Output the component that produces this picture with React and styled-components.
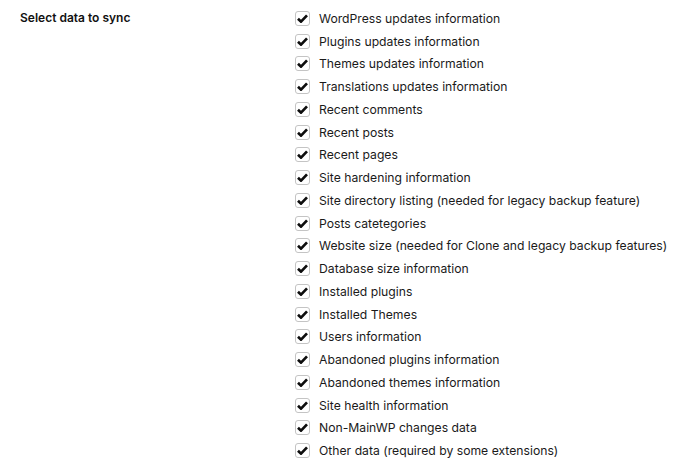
import styled, { createGlobalStyle } from 'styled-components';

const GlobalStyle = createGlobalStyle`
  body {
    margin: 0;
    background: #fff;
    font-family: Inter, "Noto Sans", sans-serif;
  }
`;

const items = [
  'WordPress updates information',
  'Plugins updates information',
  'Themes updates information',
  'Translations updates information',
  'Recent comments',
  'Recent posts',
  'Recent pages',
  'Site hardening information',
  'Site directory listing (needed for legacy backup feature)',
  'Posts catetegories',
  'Website size (needed for Clone and legacy backup features)',
  'Database size information',
  'Installed plugins',
  'Installed Themes',
  'Users information',
  'Abandoned plugins information',
  'Abandoned themes information',
  'Site health information',
  'Non-MainWP changes data',
  'Other data (required by some extensions)',
];

// heavy check like the one used by the checkbox skin
const CheckIcon = () => (
  <svg width="11" height="9" viewBox="0 0 11 9">
    <path d="M1 4.7 L4 7.6 L10 1.4" fill="none" stroke="#0d0d0d" strokeWidth="2.7" />
  </svg>
);

const App = () => {
  return (
    <>
      <GlobalStyle />
      <StForm>
        <StLabel>Select data to sync</StLabel>
        <StList>
          {items.map((item) => (
            <StRow key={item}>
              <StBox>
                <CheckIcon />
              </StBox>
              <StText>{item}</StText>
            </StRow>
          ))}
        </StList>
      </StForm>
    </>
  );
};

export default App;

const StForm = styled.div`
  display: grid;
  grid-template-columns: 275px 1fr;
  padding: 7px 0 0 20px;
`;

const StLabel = styled.div`
  font-size: 12px;
  font-weight: 600;
  color: #111;
  line-height: 22.75px;
`;

const StList = styled.div`
  display: flex;
  flex-direction: column;
`;

const StRow = styled.label`
  display: flex;
  align-items: center;
  height: 22.75px;
  white-space: nowrap;
`;

const StBox = styled.span`
  display: flex;
  align-items: center;
  justify-content: center;
  flex-shrink: 0;
  width: 13px;
  height: 13px;
  border: 1px solid #c4c4c4;
  border-radius: 3px;
  background: #fff;
  margin-right: 9px;
`;

const StText = styled.span`
  font-size: 12.2px;
  color: #1a1a1a;
`;
